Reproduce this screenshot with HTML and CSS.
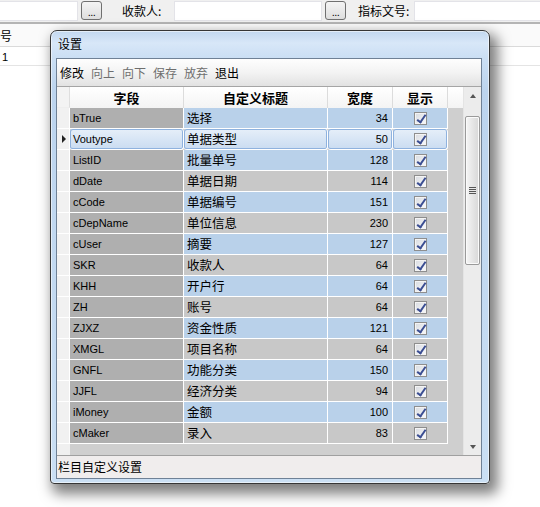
FILE: index.html
```html
<!DOCTYPE html>
<html>
<head>
<meta charset="utf-8">
<link rel="stylesheet" href="styles.css">
</head>
<body>
<div class="topbar">
  <div class="inp w1"></div>
  <div class="btn">...</div>
  <div class="lbl l1">收款人:</div>
  <div class="inp w2"></div>
  <div class="btn">...</div>
  <div class="lbl l2">指标文号:</div>
  <div class="inp w3"></div>
</div>
<div class="bghead">号</div>
<div class="bgrow">1</div>

<div class="dlg">
  <div class="ttl">设置</div>
  <div class="client">
    <div class="tools">
      <span class="on">修改</span><span>向上</span><span>向下</span><span>保存</span><span>放弃</span><span class="on">退出</span>
    </div>
    <div class="gridarea">
      <div class="tbl">
        <div class="hrow"><span class="ind"></span><span class="h f">字段</span><span class="h t">自定义标题</span><span class="h n">宽度</span><span class="h k">显示</span></div>
        <div class="row b"><span class="ind"></span><span class="c f">bTrue</span><span class="c t">选择</span><span class="c n">34</span><span class="c k"><b class="cb"></b></span></div>
        <div class="row sel"><span class="ind"><i class="arr"></i></span><span class="c f">Voutype</span><span class="c t">单据类型</span><span class="c n">50</span><span class="c k"><b class="cb"></b></span></div>
        <div class="row b"><span class="ind"></span><span class="c f">ListID</span><span class="c t">批量单号</span><span class="c n">128</span><span class="c k"><b class="cb"></b></span></div>
        <div class="row g"><span class="ind"></span><span class="c f">dDate</span><span class="c t">单据日期</span><span class="c n">114</span><span class="c k"><b class="cb"></b></span></div>
        <div class="row b"><span class="ind"></span><span class="c f">cCode</span><span class="c t">单据编号</span><span class="c n">151</span><span class="c k"><b class="cb"></b></span></div>
        <div class="row g"><span class="ind"></span><span class="c f">cDepName</span><span class="c t">单位信息</span><span class="c n">230</span><span class="c k"><b class="cb"></b></span></div>
        <div class="row b"><span class="ind"></span><span class="c f">cUser</span><span class="c t">摘要</span><span class="c n">127</span><span class="c k"><b class="cb"></b></span></div>
        <div class="row g"><span class="ind"></span><span class="c f">SKR</span><span class="c t">收款人</span><span class="c n">64</span><span class="c k"><b class="cb"></b></span></div>
        <div class="row b"><span class="ind"></span><span class="c f">KHH</span><span class="c t">开户行</span><span class="c n">64</span><span class="c k"><b class="cb"></b></span></div>
        <div class="row g"><span class="ind"></span><span class="c f">ZH</span><span class="c t">账号</span><span class="c n">64</span><span class="c k"><b class="cb"></b></span></div>
        <div class="row b"><span class="ind"></span><span class="c f">ZJXZ</span><span class="c t">资金性质</span><span class="c n">121</span><span class="c k"><b class="cb"></b></span></div>
        <div class="row g"><span class="ind"></span><span class="c f">XMGL</span><span class="c t">项目名称</span><span class="c n">64</span><span class="c k"><b class="cb"></b></span></div>
        <div class="row b"><span class="ind"></span><span class="c f">GNFL</span><span class="c t">功能分类</span><span class="c n">150</span><span class="c k"><b class="cb"></b></span></div>
        <div class="row g"><span class="ind"></span><span class="c f">JJFL</span><span class="c t">经济分类</span><span class="c n">94</span><span class="c k"><b class="cb"></b></span></div>
        <div class="row b"><span class="ind"></span><span class="c f">iMoney</span><span class="c t">金额</span><span class="c n">100</span><span class="c k"><b class="cb"></b></span></div>
        <div class="row g"><span class="ind"></span><span class="c f">cMaker</span><span class="c t">录入</span><span class="c n">83</span><span class="c k"><b class="cb"></b></span></div>
      </div>
      <div class="sb">
        <div class="sbarr"><i class="up"></i></div>
        <div class="thumb"><i class="grip"></i></div>
        <div class="sbfill"></div>
        <div class="sbarr"><i class="dn"></i></div>
      </div>
    </div>
    <div class="status">栏目自定义设置</div>
  </div>
</div>
</body>
</html>
```
FILE: styles.css
```css
* { box-sizing: border-box; }
html, body { margin: 0; }
body {
  width: 540px;
  height: 507px;
  overflow: hidden;
  position: relative;
  background: #fff;
  font-family: "Noto Sans CJK SC", "Liberation Sans", sans-serif;
  font-size: 12px;
  color: #000;
}

/* background page */
.topbar {
  height: 24px;
  background: #f0f0f0;
  display: flex;
  align-items: flex-start;
  padding-top: 1px;
  border-bottom: 2px solid #b4b4b4;
  box-shadow: 0 1px 0 #dcdcdc;
}
.inp { height: 20px; background: #fff; border: 1px solid #e3e3e8; }
.w1 { width: 78px; border-left: none; }
.w2 { width: 148px; }
.w3 { flex: 1; border-right: none; }
.btn {
  width: 21px;
  height: 19px;
  margin: 0 0 0 3px;
  border: 1px solid #707070;
  border-radius: 3px;
  background: linear-gradient(#f4f4f4, #dedede);
  font-family: "Liberation Sans", sans-serif;
  font-size: 11px;
  line-height: 20px;
  text-align: center;
  letter-spacing: -0.5px;
}
.lbl { height: 20px; line-height: 20px; font-size: 12px; }
.l1 { width: 52px; margin-left: 20px; }
.l2 { width: 56px; margin-left: 12px; }

.bghead {
  height: 23px;
  line-height: 24px;
  background: #fafafa;
  border-bottom: 1px solid #dadada;
  font-size: 12px;
}
.bgrow {
  height: 19px;
  line-height: 21px;
  border-bottom: 1px solid #e4e4e4;
  font-family: "Liberation Sans", sans-serif;
  font-size: 11px;
  padding-left: 2px;
}

/* dialog window */
.dlg {
  position: absolute;
  left: 50px;
  top: 30px;
  width: 440px;
  height: 454px;
  border: 1px solid #363636;
  border-radius: 7px 7px 4px 4px;
  background: linear-gradient(180deg, #c2d8f0 0, #d8e7f8 12px, #cbdff4 26px, #bcd4ee 60px, #cadff4 100%);
  box-shadow: 5px 7px 13px 3px rgba(0, 0, 0, .5), inset 0 0 0 1px rgba(255, 255, 255, .55);
  padding: 0 7px 4px 5px;
  display: flex;
  flex-direction: column;
}
.ttl {
  height: 27px;
  padding: 6px 0 0 2px;
  font-size: 12px;
  line-height: 14px;
}
.client {
  flex: 1;
  border: 1px solid #6f8196;
  background: #f0f0f0;
  display: flex;
  flex-direction: column;
}
.tools {
  height: 28px;
  background: linear-gradient(#fefefe, #f3f3f3 50%, #e2e2e2);
  border-bottom: 1px solid #a5a5a5;
  display: flex;
  align-items: center;
  gap: 7px;
  padding: 0 0 0 3px;
  font-size: 12px;
  color: #6e6e6e;
}
.tools .on { color: #000; }

.gridarea { height: 368px; display: flex; }
.tbl {
  width: 406px;
  background: linear-gradient(to right, #f0f0f0 13px, #cfcfcf 13px);
}
.hrow, .row { display: flex; height: 21px; }
.hrow { background: linear-gradient(#ffffff, #f4f4f4); }
.ind { width: 13px; flex: none; border-right: 1px solid #fff; border-bottom: 1px solid #fff; background: #f1f1f1; display: flex; align-items: center; justify-content: center; }
.hrow .ind { background: #f3f3f3; border-right: 1px solid #dedede; border-bottom: 1px solid #eee; }
.f { width: 114px; flex: none; }
.t { width: 144px; flex: none; }
.n { width: 65px; flex: none; }
.k { width: 55px; flex: none; }
.h {
  border-right: 1px solid #dcdcdc;
  text-align: center;
  font-weight: bold;
  line-height: 21px;
  font-size: 13px;
}
.c {
  border-right: 1px solid #fff;
  border-bottom: 1px solid #fff;
  line-height: 20px;
  white-space: nowrap;
  overflow: hidden;
}
.c.f { background: #afafaf; padding-left: 3px; font-family: "Liberation Sans", sans-serif; font-size: 11px; }
.c.t { padding-left: 3px; font-size: 12.5px; }
.c.n { text-align: right; padding-right: 4px; font-family: "Liberation Sans", sans-serif; font-size: 11px; }
.c.k { display: flex; align-items: center; justify-content: center; }
.row.b .t, .row.b .n, .row.b .k { background: #b9d1ea; }
.row.g .t, .row.g .n, .row.g .k { background: #c8c8c8; }
.row.sel .c {
  background: linear-gradient(#e6eff9, #cadcf1);
  box-shadow: inset 0 0 0 1px #8fb2de;
  border-radius: 3px;
}
.arr {
  width: 0;
  height: 0;
  border-top: 4px solid transparent;
  border-bottom: 4px solid transparent;
  border-left: 4px solid #222;
  margin-left: 1px;
}
.cb {
  width: 13px;
  height: 13px;
  margin-left: 1px;
  border: 1px solid #8e8e8e;
  background: linear-gradient(135deg, #d8dbe0, #f9fafc);
  box-shadow: inset 0 0 0 1px #f4f4f4;
  position: relative;
}
.cb::after {
  content: "";
  position: absolute;
  left: 4px;
  top: 0px;
  width: 3px;
  height: 8px;
  border: solid #3a4d92;
  border-width: 0 2px 2px 0;
  transform: rotate(35deg);
}

/* scrollbar */
.sb {
  width: 18px;
  background: #ececec;
  border-left: 1px solid #e4e4e4;
  display: flex;
  flex-direction: column;
}
.sbarr { height: 17px; display: flex; align-items: center; justify-content: center; }
.up { width: 0; height: 0; border-left: 3.5px solid transparent; border-right: 3.5px solid transparent; border-bottom: 4px solid #555; }
.dn { width: 0; height: 0; border-left: 3.5px solid transparent; border-right: 3.5px solid transparent; border-top: 4px solid #555; }
.thumb {
  height: 149px;
  margin: 12px 1px 0 1px;
  border: 1px solid #9a9a9a;
  border-radius: 2px;
  background: linear-gradient(to right, #f6f6f6, #e6e6e6 50%, #d8d8d8);
  box-shadow: inset 0 0 0 1px #fbfbfb;
  display: flex;
  align-items: center;
  justify-content: center;
}
.grip {
  width: 7px;
  height: 7px;
  background: repeating-linear-gradient(#555 0 1px, #e8e8e8 1px 2px);
}
.sbfill { flex: 1; }

.status {
  flex: 1;
  border-top: 1px solid #a0a0a0;
  background: #f0eded;
  padding-left: 1px;
  line-height: 21px;
  font-size: 12px;
}
```
